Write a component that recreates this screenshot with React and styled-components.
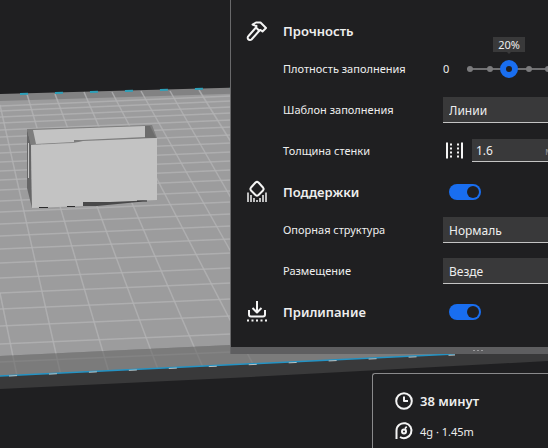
import { useState } from "react";
import styled, { createGlobalStyle } from "styled-components";

const COLUMNS = [
  [0, 293, 17, 376],
  [0, 105, 61, 376],
  [27, 94, 110, 376],
  [55, 94, 159, 372],
  [84, 92, 205, 372],
  [112, 92, 257, 372],
  [141, 91, 231, 252],
  [170, 91, 231, 198],
  [199, 90, 231, 142],
];

const ROWS = [
  106, 111, 117, 123, 130, 137, 145, 153, 162, 171, 180, 190, 201, 212, 224,
  236, 249, 263, 278, 293, 309, 326, 344, 362,
];

// 빌드 플레이트와 모델
function Scene() {
  return (
    <SceneStyle viewBox="0 0 548 448" preserveAspectRatio="xMinYMin slice" aria-hidden="true">
      <polygon points="0,94 548,79 548,350 0,376" fill="#828283" />
      <polygon points="0,101 548,84 548,330 0,356" fill="#9c9c9d" />
      <g stroke="#b3b3b4" strokeWidth="1.5" strokeOpacity="0.8">
        {COLUMNS.map(([x1, y1, x2, y2]) => (
          <line key={x1 + "-" + y1} x1={x1} y1={y1} x2={x2} y2={y2} />
        ))}
        {ROWS.map((y) => (
          <line key={y} x1="0" y1={y} x2="231" y2={y - 10} />
        ))}
      </g>
      <polygon points="0,356 231,345 548,330 548,350 0,376" fill="#797979" fillOpacity="0.8" />
      <polygon points="0,376 455,354 548,350 548,361 231,378 0,389" fill="#39393a" />
      <path d="M0 376 455 354" stroke="#2493c4" strokeWidth="1.5" />
      <path d="M9 376 455 355" stroke="#b7c3c6" strokeDasharray="8 32" />
      <path d="M20 94 230 88" stroke="#2e9fb8" strokeWidth="2" strokeDasharray="8 27" />

      <polygon points="27,129 152,125 157,138 31,145" fill="#7d7d7d" />
      <polygon points="27,129 31,145 32,208 27,188" fill="#666667" />
      <path d="M28.500 143V178" stroke="#c5c5c5" />
      <polygon points="33,130 145,126 145,137 82,140 74,140 74,142 36,144" fill="#c3c3c3" />
      <polygon points="145,126 150,126 156,138 145,138" fill="#6c6c6c" />
      <polygon points="83,201 157,198 138,202 97,206 83,206" fill="#49494a" />
      <polygon points="31,145 74,143 83,141 157,138 157,200 110,202 83,202 83,206 32,208" fill="#c3c3c3" />
      <path d="M39 207.500h9M67 206.500h8M137 201h10" stroke="#2b2b2c" />
    </SceneStyle>
  );
}

function HammerIcon() {
  return (
    <Icon viewBox="0 0 24 24">
      <path d="M7.500 5.500 11 3.500h4.500L21 9l-3.500 3.500-2-1.500-1.500.5-3-3 .5-1.500Z" />
      <path d="M11 8.500 3.500 17a2 2 0 0 0 3 3.500l8-9" />
    </Icon>
  );
}

function SupportIcon() {
  return (
    <Icon viewBox="0 0 24 24">
      <path d="M10.500 2.500q1.500-1.200 3 0l4.500 5q1.200 1.500 0 3l-4.500 4.500q-1.500 1.200-3 0L6 10.500q-1.200-1.500 0-3Z" />
      <path d="M3 12.500V22M6 15v7M9 18v4M12 20v2M15 18v4M18 15v7M21 12.500V22" strokeWidth="1.500" />
    </Icon>
  );
}

function AdhesionIcon() {
  return (
    <Icon viewBox="0 0 24 24">
      <path d="M12 1v11M7.500 8l4.500 4.500L16.500 8M4 10v4.500q0 2 2 2h12q2 0 2-2V10" />
      <path d="M2 20.500h20" strokeDasharray="2 2.500" />
    </Icon>
  );
}

function WallIcon() {
  return (
    <Icon viewBox="0 0 24 24">
      <path d="M4 3.500v16M19 3.500v16" />
      <path d="M8 4.500v15M15 4.500v15" strokeDasharray="2 2" />
    </Icon>
  );
}

function ClockIcon() {
  return (
    <Icon viewBox="0 0 24 24">
      <circle cx="12" cy="12" r="7.800" />
      <path d="M12 7.500V12h4" />
    </Icon>
  );
}

function SpoolIcon() {
  return (
    <Icon viewBox="0 0 24 24">
      <path d="M4.500 20V11.500a7.500 7.500 0 1 1 3.500 6.500" />
      <circle cx="12" cy="12.500" r="2" />
      <path d="M13.500 11V8.500L15 8" strokeWidth="1.500" />
    </Icon>
  );
}

export default function App() {
  const [infill, setInfill] = useState(20);
  const [wall, setWall] = useState("1.6");
  const [support, setSupport] = useState(true);
  const [adhesion, setAdhesion] = useState(true);

  return (
    <PageStyle>
      <GlobalStyle />
      <Scene />
      <SettingsPanel>
        <TitleRow>
          <HammerIcon />
          <Title>Прочность</Title>
        </TitleRow>
        <SettingRow>
          <Label htmlFor="infill">Плотность заполнения</Label>
          <SliderGroup>
            <SliderMin>0</SliderMin>
            <SliderBox>
              <Ticks>
                {Array.from({ length: 11 }, (_, i) => (
                  <i key={i} />
                ))}
              </Ticks>
              <Slider
                id="infill"
                type="range"
                min="0"
                max="100"
                step="10"
                value={infill}
                onChange={(e) => setInfill(Number(e.target.value))}
              />
              <Bubble htmlFor="infill" style={{ left: 9 + infill * 1.95 }}>
                {infill}%
              </Bubble>
            </SliderBox>
          </SliderGroup>
        </SettingRow>
        <SettingRow>
          <Label htmlFor="pattern">Шаблон заполнения</Label>
          <Select id="pattern" defaultValue="lines">
            <option value="lines">Линии</option>
          </Select>
        </SettingRow>
        <SettingRow>
          <Label htmlFor="wall">Толщина стенки</Label>
          <WallGroup>
            <WallIcon />
            <NumberField>
              <input id="wall" value={wall} onChange={(e) => setWall(e.target.value)} />
              <span>мм</span>
            </NumberField>
          </WallGroup>
        </SettingRow>

        <TitleRow>
          <SupportIcon />
          <Title>
            <label htmlFor="support">Поддержки</label>
          </Title>
          <Toggle
            id="support"
            type="checkbox"
            checked={support}
            onChange={() => setSupport(!support)}
          />
        </TitleRow>
        <SettingRow>
          <Label htmlFor="structure">Опорная структура</Label>
          <Select id="structure" defaultValue="normal">
            <option value="normal">Нормаль</option>
          </Select>
        </SettingRow>
        <SettingRow>
          <Label htmlFor="placement">Размещение</Label>
          <Select id="placement" defaultValue="everywhere">
            <option value="everywhere">Везде</option>
          </Select>
        </SettingRow>

        <TitleRow>
          <AdhesionIcon />
          <Title>
            <label htmlFor="adhesion">Прилипание</label>
          </Title>
          <Toggle
            id="adhesion"
            type="checkbox"
            checked={adhesion}
            onChange={() => setAdhesion(!adhesion)}
          />
        </TitleRow>
        <ResizeHandle>
          <i />
          <i />
          <i />
        </ResizeHandle>
      </SettingsPanel>

      <JobCard>
        <JobLine $strong>
          <ClockIcon />
          38 минут
        </JobLine>
        <JobLine>
          <SpoolIcon />
          4g · 1.45m
        </JobLine>
      </JobCard>
    </PageStyle>
  );
}

const GlobalStyle = createGlobalStyle`
  * {
    box-sizing: border-box;
  }

  body {
    margin: 0;
    background-color: #1f1f21;
    color: #eeeeee;
    font-family: "Noto Sans", "Open Sans", sans-serif;
    font-size: 12px;
  }

  input, select {
    margin: 0;
    color: inherit;
    font: inherit;
  }
`;

const PageStyle = styled.main`
  position: relative;
  display: flex;
  flex-direction: column;
  min-height: 100vh;
  overflow: hidden;
`;

const SceneStyle = styled.svg`
  position: absolute;
  inset: 0;
  width: 100%;
  height: 100%;
  fill: none;
`;

const Icon = styled.svg`
  width: 24px;
  height: 24px;
  flex: none;
  fill: none;
  stroke: #f4f4f4;
  stroke-width: 2;
  stroke-linejoin: round;
`;

const SettingsPanel = styled.section`
  position: relative;
  width: 494px;
  margin-left: 230px;
  padding-top: 10px;
  border-left: 1px solid #69696b;
  background-color: #1f1f21;
`;

const TitleRow = styled.div`
  display: grid;
  grid-template-columns: 38px 160px 1fr;
  align-items: center;
  height: 38px;
  padding: 4px 20px 0 14px;
`;

const SettingRow = styled.div`
  display: grid;
  grid-template-columns: 160px 1fr;
  align-items: center;
  height: 41px;
  padding: 0 20px 0 52px;
`;

const Title = styled.h2`
  margin: 0;
  font-size: 13px;
  font-weight: 600;
`;

const Label = styled.label`
  font-size: 11px;
`;

const SliderGroup = styled.div`
  display: flex;
  align-items: center;
`;

const SliderMin = styled.span`
  width: 18px;
  font-size: 11px;
`;

const SliderBox = styled.div`
  position: relative;
  display: grid;
  align-items: center;
  width: 213px;
`;

const Ticks = styled.div`
  grid-area: 1 / 1;
  display: flex;
  justify-content: space-between;
  align-items: center;
  margin: 0 6px;
  background: linear-gradient(#707072, #707072) center / 100% 2px no-repeat;

  i {
    width: 6px;
    height: 6px;
    border-radius: 50%;
    background-color: #7b7b7d;
  }
`;

const Slider = styled.input`
  grid-area: 1 / 1;
  z-index: 1;
  width: 100%;
  height: 18px;
  appearance: none;
  background: none;

  &::-webkit-slider-thumb {
    appearance: none;
    width: 18px;
    height: 18px;
    border: 6px solid #196ef0;
    border-radius: 50%;
    background-color: #1f1f21;
  }
`;

const Bubble = styled.output`
  position: absolute;
  bottom: 26px;
  width: 32px;
  margin-left: -16px;
  background-color: #39393a;
  font-size: 11px;
  line-height: 15px;
  text-align: center;

  &::after {
    content: "";
    position: absolute;
    top: 100%;
    left: 14px;
    border: 2px solid transparent;
    border-top-color: #39393a;
  }
`;

const Select = styled.select`
  width: 100%;
  height: 26px;
  padding: 2px 6px 0;
  appearance: none;
  border: none;
  border-bottom: 1px solid #c4c4c4;
  border-radius: 0;
  background-color: #39393a;
`;

const WallGroup = styled.div`
  display: flex;
  align-items: center;
  gap: 5px;
`;

const NumberField = styled.div`
  display: flex;
  align-items: center;
  height: 23px;
  padding: 0 4px;
  border-bottom: 1px solid #c4c4c4;
  background-color: #39393a;

  input {
    width: 69px;
    padding: 0;
    border: none;
    background: none;
  }

  span {
    color: #8a8a8c;
    font-size: 11px;
  }
`;

const Toggle = styled.input`
  appearance: none;
  width: 32px;
  height: 16px;
  margin-left: 6px;
  border-radius: 8px;
  background-color: #69696b;

  &::before {
    content: "";
    display: block;
    width: 12px;
    height: 12px;
    margin: 2px;
    border-radius: 50%;
    background-color: #1f1f21;
  }

  &:checked {
    background-color: #196ef0;
  }

  &:checked::before {
    margin-left: 18px;
  }
`;

const ResizeHandle = styled.div`
  display: flex;
  justify-content: center;
  align-items: center;
  gap: 2px;
  height: 7px;
  margin-top: 18px;
  background-color: #5e5e60;

  i {
    width: 2px;
    height: 1px;
    background-color: #9a9a9c;
  }
`;

const JobCard = styled.section`
  position: relative;
  flex: 1;
  margin: 19px 0 0 372px;
  padding: 12px 19px 0;
  border: 1px solid #8a8a8c;
  border-width: 1px 0 0 1px;
  border-top-left-radius: 3px;
  background-color: #1f1f21;
`;

const JobLine = styled.div`
  display: flex;
  align-items: center;
  gap: 4px;
  height: 30px;
  font-size: ${(props) => (props.$strong ? "13px" : "11px")};
  font-weight: ${(props) => (props.$strong ? 600 : 400)};
`;
